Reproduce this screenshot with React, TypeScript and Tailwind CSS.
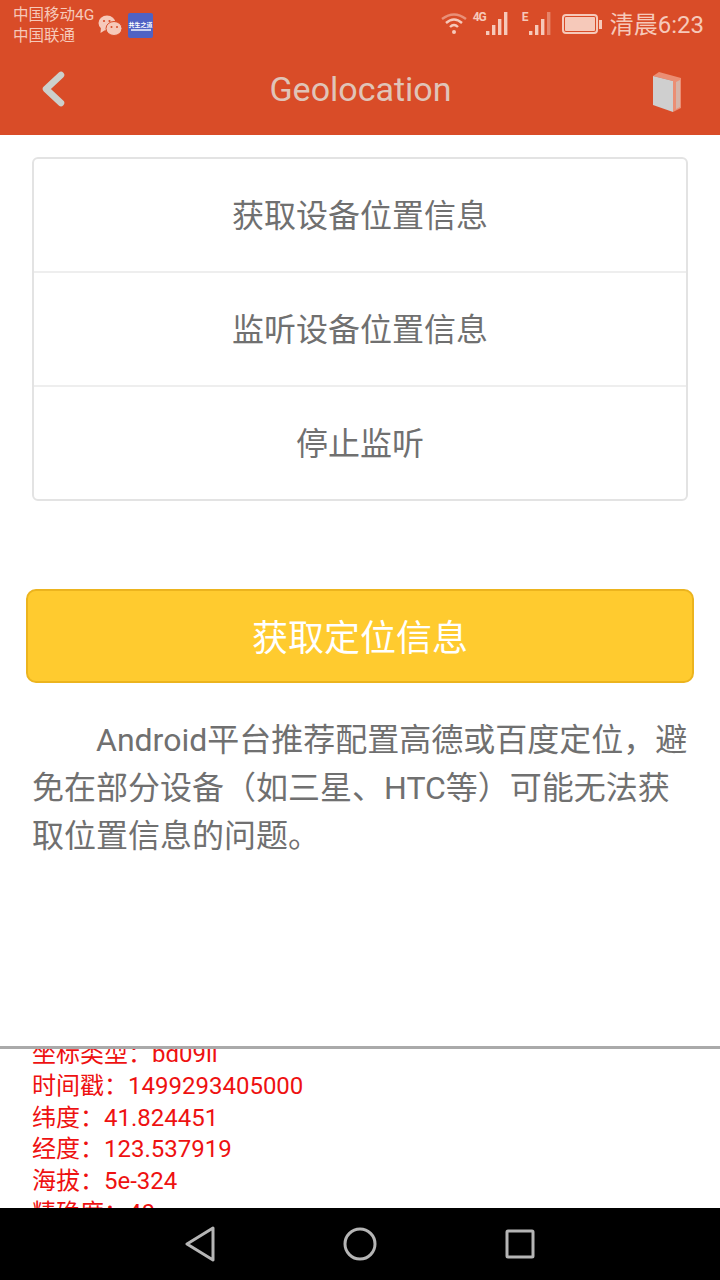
const font = 'font-["Roboto","Noto_Sans_CJK_SC",sans-serif]';

function SignalBars({ dimLast }: { dimLast?: boolean }) {
  return (
    <svg width="24" height="24" viewBox="0 0 24 24" fill="#f6c9ba">
      <rect x="0" y="19" width="3.4" height="4" />
      <rect x="6" y="13" width="3.4" height="10" />
      <rect x="12" y="7" width="3.4" height="16" />
      <rect x="18" y="0" width="3.4" height="23" opacity={dimLast ? 0.45 : 1} />
    </svg>
  );
}

function StatusBar() {
  return (
    <div className="h-[48px] flex items-start justify-between pl-[13px] pr-[16px]">
      <div className="flex items-start">
        <div className="text-[15.5px] leading-[21px] text-[#f6c9ba] pt-[5px] w-[85px] whitespace-nowrap">
          <div>中国移动4G</div>
          <div>中国联通</div>
        </div>
        <svg width="25" height="24" viewBox="0 0 25 24" className="mt-[14px]" fill="#f6c9ba">
          <ellipse cx="9" cy="9" rx="8.5" ry="7.5" />
          <path d="M3 13 L2.5 19 L8 15.5 Z" />
          <ellipse cx="16" cy="14.5" rx="8" ry="7" stroke="#d94c28" strokeWidth="1" />
          <circle cx="6" cy="7" r="1.1" fill="#d94c28" />
          <circle cx="11.5" cy="7" r="1.1" fill="#d94c28" />
          <circle cx="13.5" cy="13" r="1" fill="#d94c28" />
          <circle cx="19" cy="13" r="1" fill="#d94c28" />
        </svg>
        <div className="w-[25px] h-[25px] mt-[13px] ml-[5px] rounded-[2px] bg-[#4f62c4] flex flex-col items-center justify-center">
          <span className="text-[6px] leading-[7px] text-white font-bold whitespace-nowrap">共生之道</span>
          <span className="w-[20px] h-[2px] mt-[1px] bg-[#c8cff0]" />
        </div>
      </div>
      <div className="flex items-start">
        <svg width="26" height="22" viewBox="0 0 26 22" className="mt-[13px]" fill="none" stroke="#f6c9ba" strokeWidth="2.4">
          <path d="M1 6 Q13 -3 25 6" opacity="0.55" />
          <path d="M5 10 Q13 3 21 10" />
          <path d="M9 14 Q13 10 17 14" />
          <circle cx="13" cy="19" r="2" fill="#f6c9ba" stroke="none" />
        </svg>
        <span className="w-[13px] ml-[6px] mt-[11px] text-[12px] leading-[13px] font-bold tracking-[-1px] text-[#f6c9ba]">4G</span>
        <div className="mt-[12px]"><SignalBars /></div>
        <span className="w-[6px] ml-[12px] mt-[11px] text-[12px] leading-[13px] font-bold text-[#f6c9ba]">E</span>
        <div className="mt-[12px] ml-[1px]"><SignalBars dimLast /></div>
        <div className="flex items-center mt-[14px] ml-[9px]">
          <div className="w-[36px] h-[20px] rounded-[4px] border-2 border-[#f6c9ba] p-[1px]">
            <div className="w-full h-full rounded-[1px] bg-[#f6c9ba]" />
          </div>
          <div className="w-[3px] h-[9px] bg-[#f6c9ba] ml-[1px]" />
        </div>
        <span className="text-[24px] leading-[28px] text-[#f6c9ba] ml-[8px] mt-[11px] whitespace-nowrap">清晨6:23</span>
      </div>
    </div>
  );
}

function NavBar() {
  return (
    <div className="h-[87px] flex items-center justify-between pl-[37px] pr-[38px] pb-[5px]">
      <svg width="32" height="40" viewBox="0 0 32 40" fill="none" stroke="#ccd0cc" strokeWidth="6.5" strokeLinecap="round" strokeLinejoin="round">
        <path d="M24 6 L9 20 L24 34" />
      </svg>
      <span className="text-[34px] leading-[40px] text-[#e0c4b8]">Geolocation</span>
      <svg width="30" height="42" viewBox="0 0 30 42" className="mt-[6px]">
        <path d="M1 5 L7 1 L29 7 L29 37 L21 41 L21 10 Z" fill="#eb8e74" />
        <path d="M1 5 L21 10 L21 41 L1 34 Z" fill="#cfcfcf" />
        <path d="M24 11 L28 9 L28 36 L24 38 Z" fill="#d6b4a8" />
      </svg>
    </div>
  );
}

const rows = ['获取设备位置信息', '监听设备位置信息', '停止监听'];
const logLines = ['坐标类型：bd09ll', '时间戳：1499293405000', '纬度：41.824451', '经度：123.537919', '海拔：5e-324', '精确度：40'];

export default function App() {
  return (
    <div className={`w-[720px] h-[1280px] overflow-hidden flex flex-col bg-white ${font}`}>
      <div className="h-[135px] bg-[#d94c28] shrink-0">
        <StatusBar />
        <NavBar />
      </div>

      <div className="h-[911px] shrink-0 flex flex-col">
        <div className="mx-[32px] mt-[22px] h-[344px] rounded-[6px] border-2 border-[#e3e3e3] flex flex-col divide-y-2 divide-[#eeeeee]">
          {rows.map((row) => (
            <div key={row} className="flex-1 flex items-center justify-center pt-[2px] text-[32px] text-[#707070]">
              {row}
            </div>
          ))}
        </div>

        <div className="mx-[26px] mt-[88px] h-[94px] rounded-[10px] border-2 border-[#ecb41e] bg-[#ffcb2f] flex items-center justify-center pt-[5px] text-[36px] text-white">
          获取定位信息
        </div>

        <p className="mx-[32px] mt-[33px] text-[32px] leading-[48px] text-[#707070] indent-[64px]">
          Android平台推荐配置高德或百度定位，避免在部分设备（如三星、HTC等）可能无法获取位置信息的问题。
        </p>
      </div>

      <div className="h-[3px] bg-[#aaaaaa] shrink-0" />
      <div className="h-[159px] shrink-0 overflow-hidden px-[32px]">
        <div className="-mt-[10px] text-[24px] leading-[31.8px] text-[#ee1111]">
          {logLines.map((line) => (
            <div key={line} className="whitespace-nowrap">{line}</div>
          ))}
        </div>
      </div>

      <div className="h-[72px] bg-black shrink-0 flex items-center justify-between pl-[184px] pr-[184px]">
        <svg width="32" height="36" viewBox="0 0 32 36" fill="none" stroke="#b5b5b5" strokeWidth="3" strokeLinejoin="round">
          <path d="M29 2 L3 18 L29 34 Z" />
        </svg>
        <svg width="34" height="34" viewBox="0 0 34 34" fill="none" stroke="#b5b5b5" strokeWidth="3">
          <circle cx="17" cy="17" r="15" />
        </svg>
        <svg width="32" height="32" viewBox="0 0 32 32" fill="none" stroke="#b5b5b5" strokeWidth="3" strokeLinejoin="round">
          <rect x="3" y="3" width="26" height="26" rx="1" />
        </svg>
      </div>
    </div>
  );
}
